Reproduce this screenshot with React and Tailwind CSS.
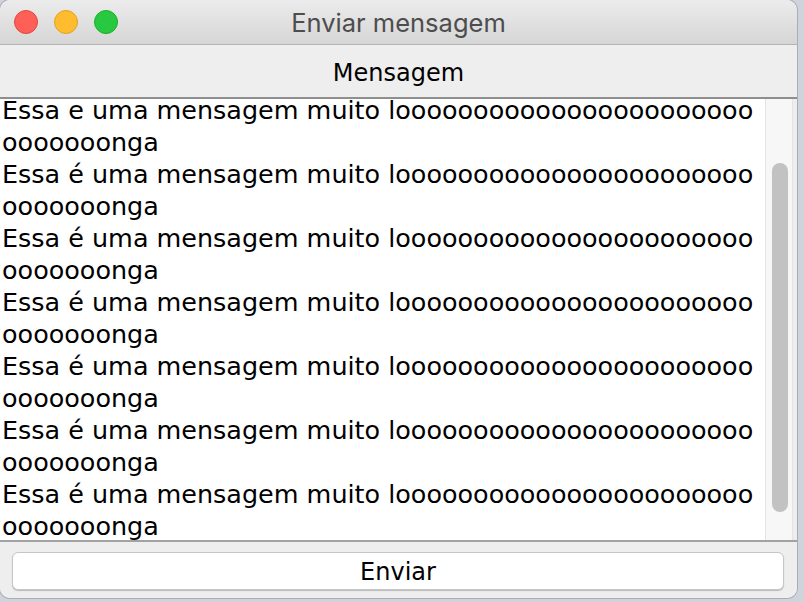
import React from "react";

const LINES = [];
for (let i = 0; i < 7; i++) {
  LINES.push(i === 0 ? "Essa e uma mensagem muito looooooooooooooooooooooo" : "Essa é uma mensagem muito looooooooooooooooooooooo");
  LINES.push("ooooooonga");
}

export default function App() {
  return (
    <div className="w-[804px] h-[602px] bg-[#cfd4dc] overflow-hidden">
      <div className="w-[797px] h-[598px] rounded-[10px] overflow-hidden flex flex-col bg-[#eeeeee] shadow-[0_0_0_1px_rgba(0,0,0,0.18)]">
        {/* Title bar */}
        <div className="h-[45px] shrink-0 grid grid-cols-[1fr_auto_1fr] items-center bg-gradient-to-b from-[#ececec] to-[#d6d6d6] border-b border-[#b4b4b4]">
          <div className="flex items-center gap-[16px] pl-[14px]">
            <span className="w-[24px] h-[24px] rounded-full bg-[#fe5f57] border border-[#e2463f]" />
            <span className="w-[24px] h-[24px] rounded-full bg-[#febc2e] border border-[#dfa123]" />
            <span className="w-[24px] h-[24px] rounded-full bg-[#28c840] border border-[#1dad2b]" />
          </div>
          <div className="text-[25.5px] leading-none text-[#4d4d4d] font-['Inter',sans-serif] pt-[2px]">
            Enviar mensagem
          </div>
          <div />
        </div>

        {/* Header */}
        <div className="h-[54px] shrink-0 flex items-center justify-center pt-[3px] bg-[#eeeeee] border-b-2 border-[#8e8e8e] font-['DejaVu_Sans',sans-serif] text-[24px] text-black">
          Mensagem
        </div>

        {/* Text area */}
        <div className="h-[441px] shrink-0 flex bg-[#eeeeee]">
          <div className="w-[765px] bg-white overflow-hidden">
            <div className="-mt-[5px] font-['DejaVu_Sans',sans-serif] text-[25.45px] text-black">
              {LINES.map((l, i) => (
                <div key={i} className="h-[32px] leading-[32px] whitespace-nowrap pl-[2px]">
                  {l}
                </div>
              ))}
            </div>
          </div>
          <div className="w-[28px] bg-[#f7f7f7] border-l border-r border-[#e4e4e4] pt-[64px] pl-[6px]">
            <div className="w-[16px] h-[349px] rounded-full bg-[#c2c2c2]" />
          </div>
          <div className="w-[4px] bg-[#eeeeee]" />
        </div>

        {/* Bottom */}
        <div className="flex-1 border-t-2 border-[#a2a2a2] bg-[#eeeeee] pt-[10px] pl-[12px] pr-[13px]">
          <div className="h-[38px] pt-[2px] bg-white border border-[#c6c6c6] rounded-[6px] shadow-[0_1px_1px_rgba(0,0,0,0.22)] flex items-center justify-center font-['DejaVu_Sans',sans-serif] text-[24px] text-black">
            Enviar
          </div>
        </div>
      </div>
    </div>
  );
}
